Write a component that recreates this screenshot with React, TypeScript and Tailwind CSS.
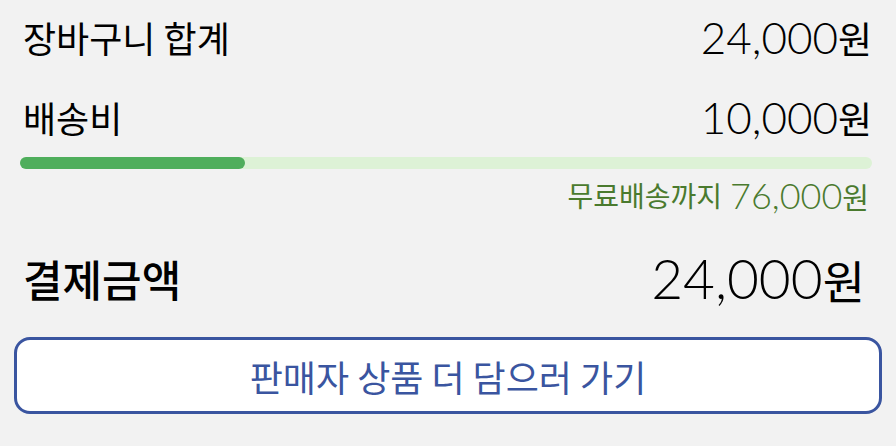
import React from 'react';

const font = { fontFamily: '"Noto Sans CJK KR", "Noto Sans", sans-serif' };
const numFont = { fontFamily: 'Lato, "Noto Sans CJK KR", sans-serif' };

// Price text: digits in Lato, the 원 suffix in the Korean face
function Won({ amount, numClass, wonClass }: { amount: number; numClass: string; wonClass: string }) {
  return (
    <span className="flex items-baseline">
      <span className={numClass} style={numFont}>{amount.toLocaleString()}</span>
      <span className={wonClass}>원</span>
    </span>
  );
}

function Row({ label, amount }: { label: string; amount: number }) {
  return (
    <div className="flex h-[56px] items-center justify-between pl-[9px] pr-[10px] text-black">
      <span className="text-[36px]">{label}</span>
      <Won amount={amount} numClass="text-[44px] font-light" wonClass="text-[37px]" />
    </div>
  );
}

export default function App() {
  const total = 24000;
  const shipping = 10000;
  const freeShippingAt = 100000;
  const remaining = freeShippingAt - total;
  const progress = (total / freeShippingAt) * 100;

  return (
    <div className="min-h-screen w-full bg-[#f2f2f2] px-[14px] pt-[9px]" style={font}>
      <Row label="장바구니 합계" amount={total} />
      <div className="mt-[24px]">
        <Row label="배송비" amount={shipping} />
      </div>

      <div className="ml-[6px] mr-[10px] mt-[12px] h-[12px] rounded-full bg-[#ddf2d6]">
        <div className="h-[12px] rounded-full bg-[#4fae5c]" style={{ width: `${progress + 2.4}%` }} />
      </div>

      <div className="mt-[10px] flex h-[32px] items-center justify-end gap-[8px] pr-[13px] text-[#4a7a2e]">
        <span className="text-[28px]">무료배송까지</span>
        <Won amount={remaining} numClass="text-[36px] font-light" wonClass="text-[29px]" />
      </div>

      <div className="mt-[37px] flex h-[60px] items-center justify-between pl-[9px] pr-[17px] text-black">
        <span className="text-[43px] font-medium">결제금액</span>
        <Won amount={total} numClass="text-[55px] font-light" wonClass="text-[46px]" />
      </div>

      <button className="mt-[29px] flex h-[77px] w-full items-center justify-center rounded-[16px] border-[3px] border-[#3a55a0] bg-white text-[36px] text-[#3a55a0]">
        판매자 상품 더 담으러 가기
      </button>
    </div>
  );
}
